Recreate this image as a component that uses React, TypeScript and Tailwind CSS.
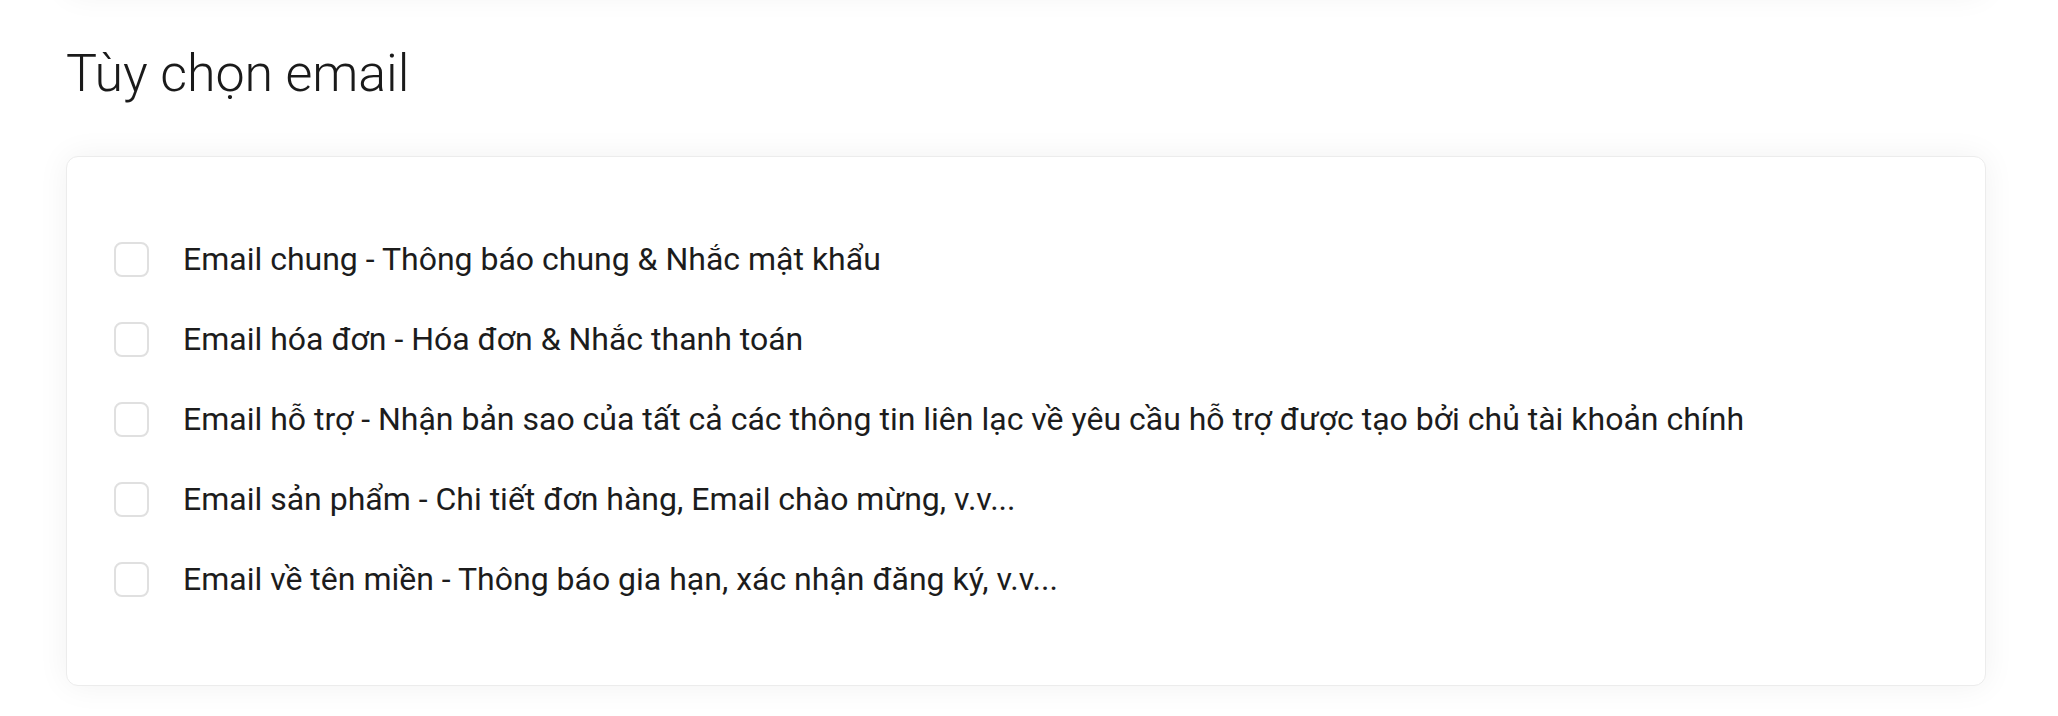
const options = [
  'Email chung - Thông báo chung & Nhắc mật khẩu',
  'Email hóa đơn - Hóa đơn & Nhắc thanh toán',
  'Email hỗ trợ - Nhận bản sao của tất cả các thông tin liên lạc về yêu cầu hỗ trợ được tạo bởi chủ tài khoản chính',
  'Email sản phẩm - Chi tiết đơn hàng, Email chào mừng, v.v...',
  'Email về tên miền - Thông báo gia hạn, xác nhận đăng ký, v.v...',
];

export default function App() {
  return (
    <div className="min-h-[716px] overflow-hidden bg-white font-['Roboto',sans-serif] text-[#1c1c1c]">
      {/* card above, mostly scrolled out of view */}
      <div className="ml-[66px] -mt-[200px] h-[194px] w-[1920px] rounded-xl border border-[#efefef] bg-white shadow-[0_0_32px_rgba(0,0,0,0.06)]" />

      <h2 className="ml-[66px] mt-[50px] text-[52px] leading-[60px] font-light tracking-[-0.1px] text-[#1a1a1a]">
        Tùy chọn email
      </h2>

      <div className="ml-[66px] mt-[52px] w-[1920px] rounded-xl border border-[#ececec] bg-white pt-[62px] pb-[66px] shadow-[0_0_32px_rgba(0,0,0,0.06)]">
        {options.map((label) => (
          <label key={label} className="flex h-[80px] cursor-pointer items-center pl-[47px]">
            <input type="checkbox" className="peer sr-only" />
            <span className="h-[35px] w-[35px] shrink-0 rounded-[8px] border-2 border-[#e0e0e0] bg-white" />
            <span className="ml-[34px] text-[32px] leading-none text-[#1c1c1c]">{label}</span>
          </label>
        ))}
      </div>
    </div>
  );
}
